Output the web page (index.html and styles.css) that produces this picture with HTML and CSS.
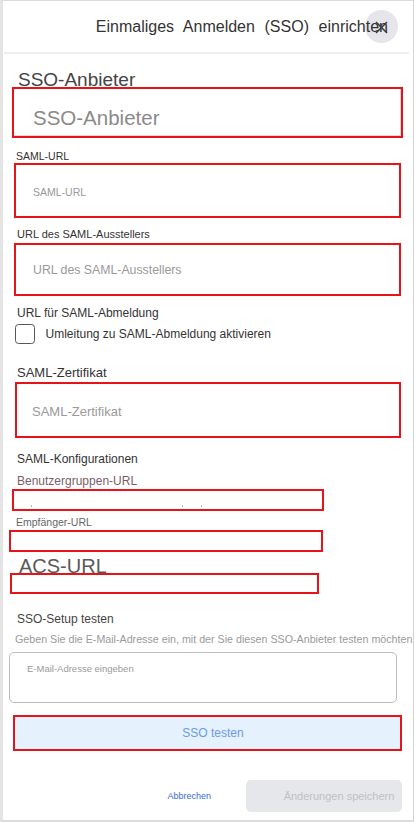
FILE: index.html
```html
<!DOCTYPE html>
<html lang="de">
<head>
<meta charset="utf-8">
<title>Einmaliges Anmelden (SSO) einrichten</title>
<link rel="stylesheet" href="styles.css">
</head>
<body>
<div class="frame">
  <header class="header">
    <h1 class="title">Einmaliges Anmelden (SSO) einrichten</h1>
    <button class="close" type="button" aria-label="Schließen">
      <svg class="close-icon" width="13" height="13" viewBox="0 0 13 13" aria-hidden="true"><path d="M1 1 L12 12 M12 1 L1 12" stroke="#3a3a3a" stroke-width="1.5" fill="none"/></svg>
    </button>
  </header>
  <div class="divider"></div>

  <div class="lbl lbl-provider">SSO-Anbieter</div>
  <div class="mark box-provider"><span class="ph ph-provider">SSO-Anbieter</span></div>

  <div class="lbl lbl-samlurl">SAML-URL</div>
  <div class="mark box-samlurl"><span class="ph ph-samlurl">SAML-URL</span></div>

  <div class="lbl lbl-issuer">URL des SAML-Ausstellers</div>
  <div class="mark box-issuer"><span class="ph ph-issuer">URL des SAML-Ausstellers</span></div>

  <div class="lbl lbl-logout">URL für SAML-Abmeldung</div>
  <label class="check-row"><span class="checkbox"></span><span class="check-text">Umleitung zu SAML-Abmeldung aktivieren</span></label>

  <div class="lbl lbl-cert">SAML-Zertifikat</div>
  <div class="mark box-cert"><span class="ph ph-cert">SAML-Zertifikat</span></div>

  <div class="lbl lbl-config">SAML-Konfigurationen</div>
  <div class="lbl lbl-groups">Benutzergruppen-URL</div>
  <div class="mark thin box-groups"><span class="tick t1"></span><span class="tick t2"></span><span class="tick t3"></span></div>

  <div class="lbl lbl-recipient">Empfänger-URL</div>
  <div class="mark thin box-recipient"></div>

  <div class="lbl lbl-acs">ACS-URL</div>
  <div class="mark thin box-acs"></div>

  <div class="lbl lbl-test">SSO-Setup testen</div>
  <div class="lbl lbl-desc">Geben Sie die E-Mail-Adresse ein, mit der Sie diesen SSO-Anbieter testen möchten</div>
  <div class="email"><span class="ph ph-email">E-Mail-Adresse eingeben</span></div>

  <div class="mark btn-test">SSO testen</div>

  <footer class="footer">
    <a class="cancel" href="#">Abbrechen</a>
    <span class="save">Änderungen speichern</span>
  </footer>
</div>
</body>
</html>
```
FILE: styles.css
```css
html, body {
  margin: 0;
  padding: 0;
  background: #ffffff;
  overflow: hidden;
}
body {
  font-family: "Liberation Sans", Arial, sans-serif;
  color: #333333;
  width: 415px;
  height: 822px;
}
.frame {
  position: relative;
  box-sizing: border-box;
  width: 414px;
  height: 822px;
  border-left: 3px solid #e4e4e4;
  border-top: 1px solid #dcdcdc;
  border-right: 1px solid #d4d4d4;
  border-bottom: 2px solid #dcdcdc;
  background: #ffffff;
}
.header {
  height: 51px;
  box-sizing: border-box;
  padding-top: 16px;
  padding-right: 25px;
  display: flex;
  justify-content: flex-end;
  align-items: flex-start;
}
.title {
  position: relative;
  z-index: 1;
  margin: 0;
  font-size: 16px;
  line-height: 20px;
  font-weight: normal;
  word-spacing: 5.2px;
  color: #333333;
  white-space: nowrap;
}
.close {
  position: absolute;
  left: 362px;
  top: 9px;
  width: 33px;
  height: 33px;
  border-radius: 50%;
  border: 0;
  padding: 0;
  background: #e5e5eb;
  display: flex;
  align-items: center;
  justify-content: center;
}
.close-icon {
  position: relative;
  z-index: 2;
  display: block;
  margin: 1px 0 0 0;
}
.divider {
  height: 2px;
  background: #eeeeee;
  margin: 0 4px 0 1px;
}

.lbl {
  white-space: nowrap;
  color: #333333;
}
.mark {
  position: relative;
  box-sizing: border-box;
  border: 2px solid #e81219;
  background: #ffffff;
}
.ph {
  display: block;
  color: #8e8e8e;
  white-space: nowrap;
}

/* SSO-Anbieter */
.lbl-provider {
  font-size: 19px;
  line-height: 18px;
  margin: 17px 0 0 15px;
  color: #444444;
}
.box-provider {
  margin: -2px 0 0 9px;
  width: 391px;
  height: 51px;
  padding: 17px 0 0 19px;
  box-shadow: inset -1px -1px 0 #d9d9d9;
}
.ph-provider {
  font-size: 20.5px;
  line-height: 24px;
  color: #8a8a8a;
}

/* SAML-URL */
.lbl-samlurl {
  font-size: 10.5px;
  line-height: 12px;
  margin: 12px 0 0 13px;
}
.box-samlurl {
  margin: 1px 0 0 11px;
  width: 387px;
  height: 55px;
  padding: 21px 0 0 17px;
}
.ph-samlurl {
  font-size: 10.5px;
  line-height: 12px;
  color: #999999;
}

/* Aussteller */
.lbl-issuer {
  font-size: 11px;
  line-height: 13px;
  margin: 10px 0 0 14px;
}
.box-issuer {
  margin: 2px 0 0 11px;
  width: 387px;
  height: 53px;
  padding: 18px 0 0 17px;
}
.ph-issuer {
  font-size: 12.3px;
  line-height: 15px;
  color: #999999;
}

/* Abmeldung */
.lbl-logout {
  font-size: 12px;
  line-height: 14px;
  margin: 10px 0 0 14px;
}
.check-row {
  display: flex;
  align-items: center;
  gap: 10.5px;
  height: 20px;
  margin: 4px 0 0 12px;
}
.checkbox {
  box-sizing: border-box;
  width: 20px;
  height: 20px;
  border: 1.5px solid #565656;
  border-radius: 3.5px;
  flex: none;
}
.check-text {
  font-size: 12px;
  line-height: 14px;
  color: #333333;
  white-space: nowrap;
}

/* Zertifikat */
.lbl-cert {
  font-size: 13px;
  line-height: 15px;
  margin: 21px 0 0 14px;
}
.box-cert {
  margin: 2px 0 0 12px;
  width: 386px;
  height: 56px;
  padding: 20px 0 0 15px;
}
.ph-cert {
  font-size: 13px;
  line-height: 15px;
  color: #999999;
}

/* Konfigurationen */
.lbl-config {
  font-size: 12px;
  line-height: 14px;
  margin: 14px 0 0 14px;
}
.lbl-groups {
  font-size: 12px;
  line-height: 14px;
  margin: 8px 0 0 14px;
  color: #7b5d6b;
}
.thin { border-width: 2px; }
.box-groups {
  margin: 1px 0 0 9px;
  width: 312px;
  height: 22px;
}
.tick {
  position: absolute;
  top: 14px;
  width: 1px;
  height: 2px;
  background: #b8b8b8;
}
.t1 { left: 17px; }
.t2 { left: 168px; }
.t3 { left: 187px; }
.lbl-recipient {
  font-size: 10.5px;
  line-height: 12px;
  margin: 5px 0 0 13px;
  color: #666666;
}
.box-recipient {
  margin: 2px 0 0 6px;
  width: 314px;
  height: 22px;
}
.lbl-acs {
  font-size: 20px;
  line-height: 20px;
  margin: 4px 0 0 16px;
  color: #5a5a5a;
}
.box-acs {
  margin: -3px 0 0 7px;
  width: 309px;
  height: 21px;
  background: transparent;
}

/* Test */
.lbl-test {
  font-size: 12px;
  line-height: 14px;
  margin: 18px 0 0 14px;
  color: #444444;
}
.lbl-desc {
  font-size: 10.7px;
  line-height: 13px;
  margin: 7px 0 0 12px;
  color: #9a9a9a;
}
.email {
  box-sizing: border-box;
  margin: 6px 0 0 6px;
  width: 388px;
  height: 51px;
  border: 1px solid #bdbdbd;
  border-radius: 5px;
  padding: 10px 0 0 17px;
}
.ph-email {
  font-size: 9.5px;
  line-height: 11px;
  color: #9a9a9a;
}
.btn-test {
  margin: 12px 0 0 10px;
  width: 389px;
  height: 36px;
  padding-left: 11px;
  background: #e5f1fc;
  color: #6b9be5;
  font-size: 12px;
  line-height: 14px;
  display: flex;
  align-items: center;
  justify-content: center;
}

/* Footer */
.footer {
  display: flex;
  justify-content: flex-end;
  align-items: center;
  gap: 35px;
  margin: 29px 11px 0 0;
}
.cancel {
  font-size: 9px;
  line-height: 11px;
  color: #3a6bd6;
  text-decoration: none;
}
.save {
  box-sizing: border-box;
  width: 156px;
  height: 32px;
  border-radius: 5px;
  background: #e6e7eb;
  color: #bfc0c4;
  font-size: 11px;
  display: flex;
  align-items: center;
  justify-content: center;
  padding-left: 30px;
}
```
